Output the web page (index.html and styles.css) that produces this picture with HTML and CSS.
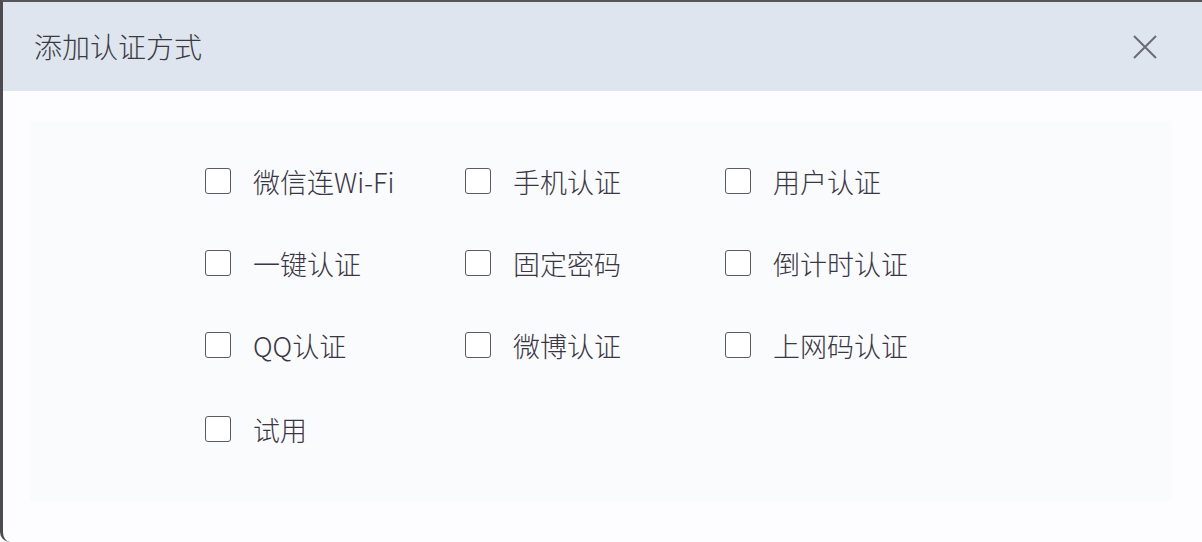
FILE: index.html
```html
<!DOCTYPE html>
<html lang="zh-CN">
<head>
    <meta charset="UTF-8">
    <meta name="viewport" content="width=device-width, initial-scale=1.0">
    <title>添加认证方式</title>

    <link rel="stylesheet" href="styles.css">
</head>

<body>

  <div class="dialog">

    <div class="dialogHeader">
      <h2 class="dialogTitle">添加认证方式</h2>
      <button class="btnFechar" aria-label="关闭">
        <svg width="26" height="26" viewBox="0 0 26 26">
          <path d="M2 2 L24 24 M24 2 L2 24" stroke="#6b6b70" stroke-width="2" fill="none"/>
        </svg>
      </button>
    </div>

    <div class="dialogBody">
      <div class="painel">
        <div class="opcoes">
          <label class="opcao"><span class="caixa"></span>微信连Wi-Fi</label>
          <label class="opcao"><span class="caixa"></span>手机认证</label>
          <label class="opcao"><span class="caixa"></span>用户认证</label>

          <label class="opcao"><span class="caixa"></span>一键认证</label>
          <label class="opcao"><span class="caixa"></span>固定密码</label>
          <label class="opcao"><span class="caixa"></span>倒计时认证</label>

          <label class="opcao"><span class="caixa"></span>QQ认证</label>
          <label class="opcao"><span class="caixa"></span>微博认证</label>
          <label class="opcao"><span class="caixa"></span>上网码认证</label>

          <label class="opcao ultima"><span class="caixa"></span>试用</label>
        </div>
      </div>
    </div>

  </div>

</body>
</html>
```

FILE: styles.css
```css
html, body {
  margin: 0;
  padding: 0;
}

body {
  background: #fdfdff;
  font-family: "Noto Sans CJK SC", "Noto Sans", sans-serif;
  color: #3b3644;
}

.dialog {
  width: 1202px;
  height: 542px;
  box-sizing: border-box;
  border-left: 3px solid #4b4b4f;
  border-top: 2px solid #55555a;
  border-bottom-left-radius: 10px;
  background: #fdfdff;
  overflow: hidden;
}

/* Cabecalho */

.dialogHeader {
  height: 89px;
  background-color: #dee5ef;
  display: flex;
  align-items: center;
  justify-content: space-between;
  padding: 0 44px 0 31px;
}

.dialogTitle {
  margin: 0;
  font-size: 28px;
  font-weight: 300;
  color: #3a3a40;
  line-height: 1;
  padding-bottom: 2px;
}

.btnFechar {
  border: none;
  background: transparent;
  padding: 0;
  width: 26px;
  height: 26px;
  display: flex;
}

/* Corpo */

.dialogBody {
  padding: 30px 30px 40px 27px;
}

.painel {
  background-color: #fafbfd;
  height: 380px;
  box-sizing: border-box;
  padding: 47px 0 0 175px;
}

.opcoes {
  display: grid;
  grid-template-columns: repeat(3, 260px);
  grid-auto-rows: 82px;
  align-items: start;
}

.opcao {
  display: flex;
  align-items: center;
  gap: 22px;
  height: 26px;
  font-size: 27px;
  font-weight: 300;
  line-height: 1;
  white-space: nowrap;
}

.ultima {
  margin-top: 2px;
}

.caixa {
  width: 26px;
  height: 26px;
  box-sizing: border-box;
  border: 1.5px solid #5a5a60;
  border-radius: 3px;
  background: #fff;
  flex: none;
}
```
